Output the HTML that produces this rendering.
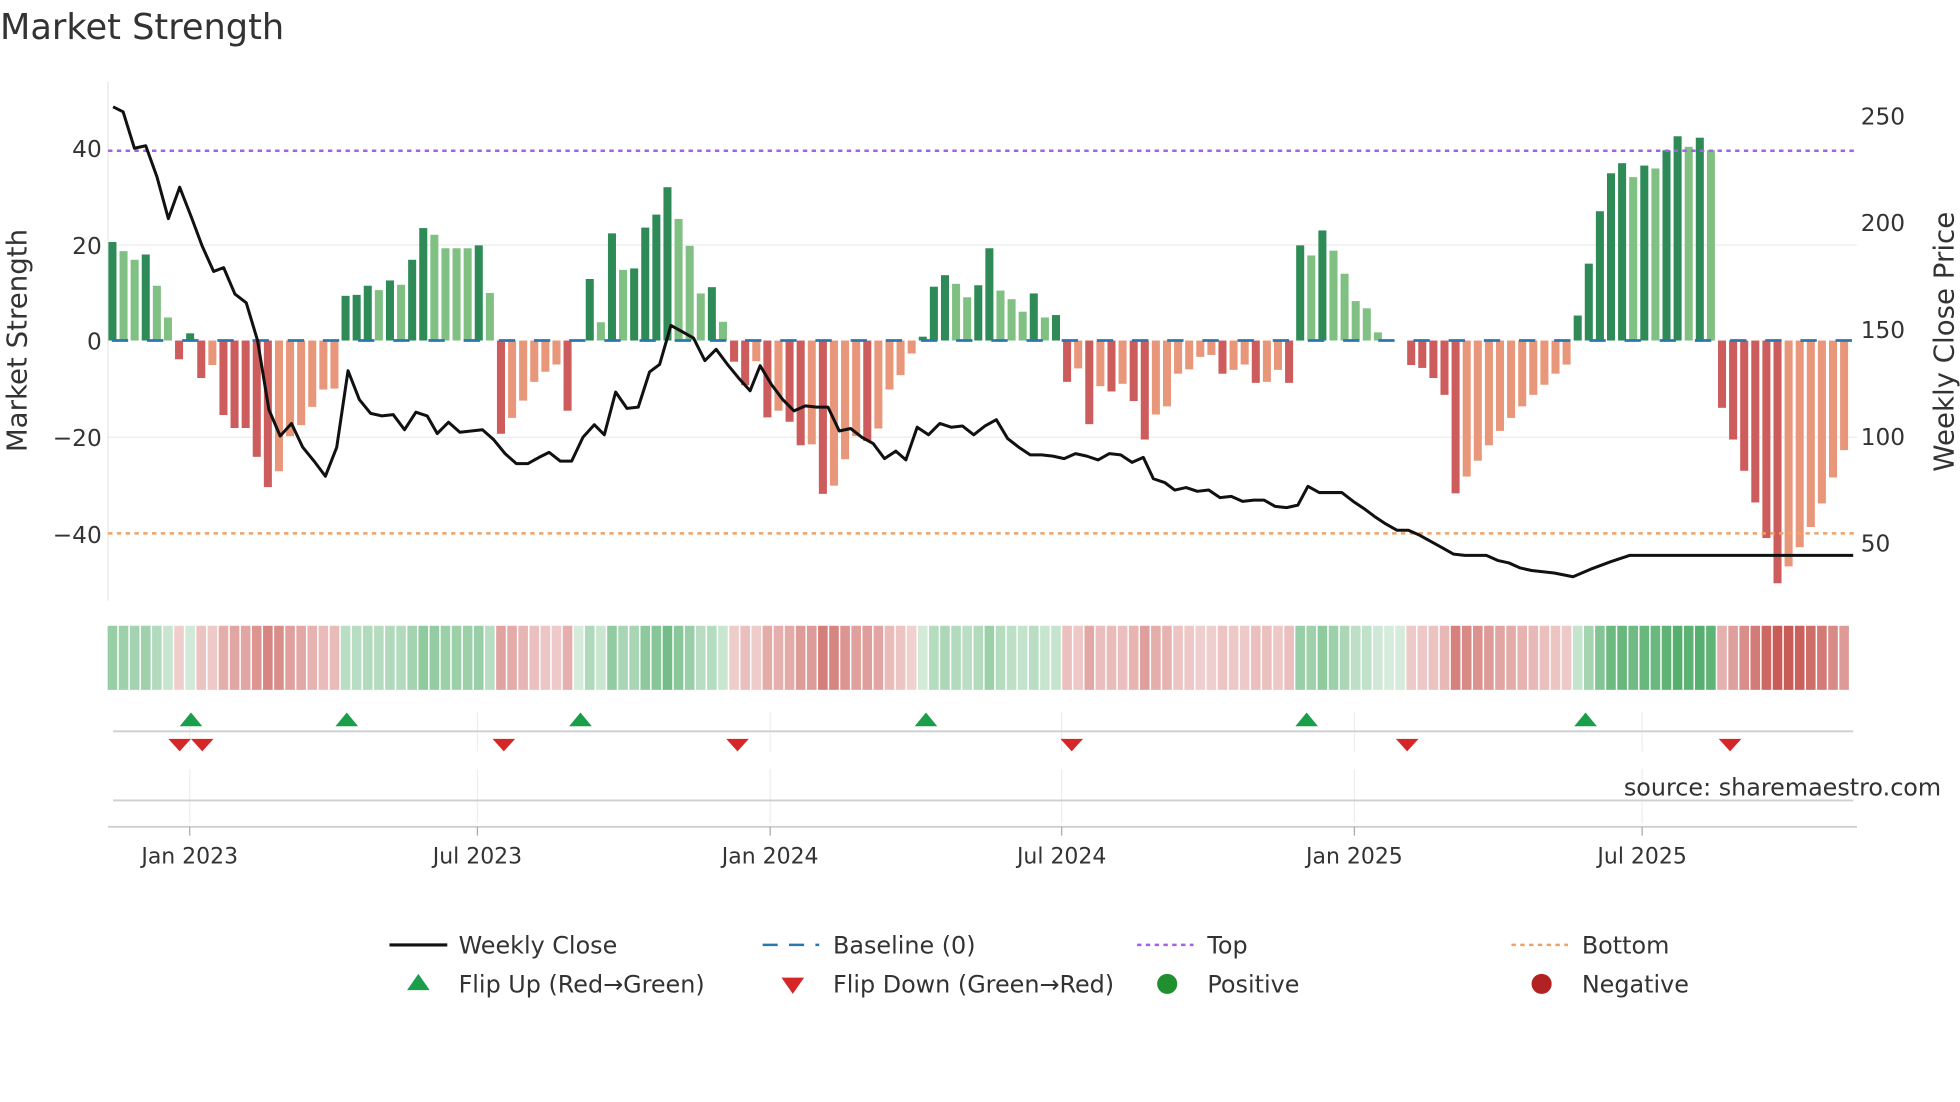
<!DOCTYPE html>
<html><head><meta charset="utf-8"><style>
html,body{margin:0;padding:0;background:#fff;width:1960px;height:1102px;overflow:hidden}
svg{display:block}
text{font-family:"DejaVu Sans","Liberation Sans",sans-serif;fill:#333}
</style></head><body>
<svg id="s" width="1960" height="1102" viewBox="0 0 1560 877" preserveAspectRatio="none" xmlns="http://www.w3.org/2000/svg">
<text x="0" y="31" font-size="28" fill="#333">Market Strength</text>
<g stroke="#ececec" stroke-width="1">
<line x1="86" y1="195" x2="1478" y2="195"/>
<line x1="86" y1="348" x2="1478" y2="348"/>
</g>
<line x1="86" y1="65" x2="86" y2="478" stroke="#e6e6e6" stroke-width="1"/>
<g id="bars"></g>
<line x1="86" y1="120" x2="1478" y2="120" stroke="#a560e8" stroke-width="2" stroke-dasharray="3.5 3.5"/>
<line x1="86" y1="424.5" x2="1478" y2="424.5" stroke="#f0a266" stroke-width="2" stroke-dasharray="3.5 3.5"/>
<line x1="89" y1="271" x2="1478" y2="271" stroke="#2a77b0" stroke-width="2.2" stroke-dasharray="13 15"/>
<polyline fill="none" stroke="#111" stroke-width="2.4" stroke-linejoin="round" points="90,85 98,89 107,118 116,116 125,141 134,174 143,149 152,172 161,196 170,216 178,213 187,234 196,241 205,271 214,326 223,347 232,337 241,356 250,367 259,379 268,356 277,295 286,318 295,329 304,331 313,330 322,342 331,328 340,331 348,345 357,336 366,344 375,343 384,342 393,350 402,361 411,369 420,369 429,364 437,360 446,367 455,367 464,348 473,338 481,346 490,312 499,325 508,324 517,296 525,290 534,259 543,264 552,269 561,287 570,278 579,290 588,301 597,311 605,291 614,306 623,318 632,327 641,323 650,324 659,324 668,343 677,341 686,348 695,353 704,365 713,359 721,366 730,340 739,346 748,337 757,340 766,339 775,346 784,339 793,334 802,349 811,356 820,362 829,362 838,363 847,365 856,361 865,363 874,366 883,361 892,362 901,368 910,364 918,381 927,384 935,390 944,388 953,391 962,390 971,396 980,395 989,399 998,398 1006,398 1015,403 1024,404 1033,402 1041,387 1050,392 1059,392 1068,392 1077,399 1086,405 1094,411 1103,417 1112,422 1121,422 1130,426 1139,431 1148,436 1157,441 1166,442 1183,442 1192,446 1201,448 1210,452 1219,454 1228,455 1237,456 1252,459 1266,453 1282,447 1297,442 1475,442"/>
<g font-size="18.5" text-anchor="end">
<text x="81" y="125">40</text>
<text x="81" y="202">20</text>
<text x="81" y="278">0</text>
<text x="81" y="355">−20</text>
<text x="81" y="432">−40</text>
</g>
<g font-size="18.5">
<text x="1481" y="99">250</text>
<text x="1481" y="184">200</text>
<text x="1481" y="269">150</text>
<text x="1481" y="354">100</text>
<text x="1481" y="439">50</text>
</g>
<text transform="translate(21,271) rotate(-90)" font-size="22" text-anchor="middle">Market Strength</text>
<text transform="translate(1555,272) rotate(-90)" font-size="22" text-anchor="middle">Weekly Close Price</text>
<g id="heat"></g>
<g stroke="#eeeeee" stroke-width="1">
<line x1="151" y1="567" x2="151" y2="598"/><line x1="380" y1="567" x2="380" y2="598"/><line x1="613" y1="567" x2="613" y2="598"/><line x1="845" y1="567" x2="845" y2="598"/><line x1="1078" y1="567" x2="1078" y2="598"/><line x1="1307" y1="567" x2="1307" y2="598"/>
<line x1="151" y1="612" x2="151" y2="655"/><line x1="380" y1="612" x2="380" y2="655"/><line x1="613" y1="612" x2="613" y2="655"/><line x1="845" y1="612" x2="845" y2="655"/><line x1="1078" y1="612" x2="1078" y2="655"/><line x1="1307" y1="612" x2="1307" y2="655"/>
</g>
<line x1="90" y1="582" x2="1475" y2="582" stroke="#cfcfcf" stroke-width="1.5"/>
<line x1="90" y1="637" x2="1475" y2="637" stroke="#cfcfcf" stroke-width="1.5"/>
<line x1="86" y1="658" x2="1478" y2="658" stroke="#cfcfcf" stroke-width="1.5"/>
<g stroke="#aaa" stroke-width="1"><line x1="151" y1="658" x2="151" y2="665"/><line x1="380" y1="658" x2="380" y2="665"/><line x1="613" y1="658" x2="613" y2="665"/><line x1="845" y1="658" x2="845" y2="665"/><line x1="1078" y1="658" x2="1078" y2="665"/><line x1="1307" y1="658" x2="1307" y2="665"/></g>
<g id="tri"></g>
<text x="1545" y="633" font-size="19" fill="#8c8c8c" text-anchor="end">source: sharemaestro.com</text>
<g font-size="17.5" text-anchor="middle">
<text x="151" y="687">Jan 2023</text><text x="380" y="687">Jul 2023</text><text x="613" y="687">Jan 2024</text><text x="845" y="687">Jul 2024</text><text x="1078" y="687">Jan 2025</text><text x="1307" y="687">Jul 2025</text>
</g>
<line x1="310" y1="752" x2="356" y2="752" stroke="#111" stroke-width="2.4"/>
<line x1="607" y1="752" x2="652" y2="752" stroke="#2a77b0" stroke-width="2" stroke-dasharray="12 9"/>
<line x1="905" y1="752" x2="950" y2="752" stroke="#a560e8" stroke-width="2" stroke-dasharray="3.5 3.5"/>
<line x1="1203" y1="752" x2="1248" y2="752" stroke="#f0a266" stroke-width="2" stroke-dasharray="3.5 3.5"/>
<polygon points="324,788 342,788 333,775" fill="#1a9e4a"/>
<polygon points="622,778 640,778 631,791" fill="#d62728"/>
<circle cx="929" cy="783" r="8" fill="#1f8f2f"/>
<circle cx="1227" cy="783" r="8" fill="#b22222"/>
<g font-size="19">
<text x="365" y="759">Weekly Close</text>
<text x="663" y="759">Baseline (0)</text>
<text x="961" y="759">Top</text>
<text x="1259" y="759">Bottom</text>
<text x="365" y="790">Flip Up (Red→Green)</text>
<text x="663" y="790">Flip Down (Green→Red)</text>
<text x="961" y="790">Positive</text>
<text x="1259" y="790">Negative</text>
</g>
</svg>
<script>
var D=[[20.5,1],[18.6,0],[16.8,0],[17.9,1],[11.4,0],[4.8,0],[-3.9,1],[1.5,1],[-7.8,1],[-5.1,0],[-15.5,1],[-18.2,1],[-18.2,1],[-24.2,1],[-30.5,1],[-27.2,0],[-19.9,0],[-17.6,0],[-13.8,0],[-10.2,0],[-10,0],[9.3,1],[9.5,1],[11.4,1],[10.5,0],[12.5,1],[11.6,0],[16.8,1],[23.4,1],[22,0],[19.2,0],[19.2,0],[19.2,0],[19.8,1],[9.9,0],[-19.4,1],[-16.1,0],[-12.5,0],[-8.6,0],[-6.5,0],[-5,0],[-14.6,1],[0,0],[12.8,1],[3.8,0],[22.3,1],[14.7,0],[15,1],[23.5,1],[26.2,1],[31.9,1],[25.3,0],[19.7,0],[9.8,0],[11.1,1],[3.9,0],[-4.4,1],[-9.3,1],[-4.3,0],[-16,1],[-14.6,0],[-16.9,1],[-21.8,1],[-21.6,0],[-31.9,1],[-30.2,0],[-24.7,0],[-19.9,0],[-20.9,1],[-18.3,0],[-10.2,0],[-7.2,0],[-2.7,0],[0.8,1],[11.2,1],[13.6,1],[11.8,0],[9,0],[11.5,1],[19.2,1],[10.4,0],[8.6,0],[6,0],[9.8,1],[4.8,0],[5.3,1],[-8.6,1],[-5.8,0],[-17.4,1],[-9.5,0],[-10.6,1],[-9,0],[-12.6,1],[-20.6,1],[-15.4,0],[-13.7,0],[-6.9,0],[-6,0],[-3.4,0],[-3,0],[-6.9,1],[-6.1,0],[-5,0],[-8.8,1],[-8.6,0],[-6.1,0],[-8.8,1],[19.8,1],[17.7,0],[22.9,1],[18.7,0],[13.9,0],[8.2,0],[6.7,0],[1.7,0],[0,0],[0,0],[-5.1,1],[-5.7,1],[-7.8,1],[-11.3,1],[-31.8,1],[-28.3,0],[-25,0],[-21.8,0],[-18.8,0],[-16.1,0],[-13.7,0],[-11.3,0],[-9.2,0],[-6.9,0],[-5,0],[5.2,1],[16,1],[26.9,1],[34.8,1],[36.9,1],[34,0],[36.4,1],[35.8,0],[39.6,1],[42.5,1],[40.3,0],[42.2,1],[39.6,0],[-14,1],[-20.6,1],[-27.1,1],[-33.7,1],[-41.1,1],[-50.5,1],[-47,0],[-43,0],[-38.8,0],[-33.9,0],[-28.5,0],[-22.8,0]];
var NS="http://www.w3.org/2000/svg",b=document.getElementById('bars'),h=document.getElementById('heat'),t=document.getElementById('tri');
function el(p,n,a){var e=document.createElementNS(NS,n);for(var k in a)e.setAttribute(k,a[k]);p.appendChild(e);}
var sp=8.835,w=6.4,y0=271,u=3.825;
D.forEach(function(d,i){var x=89.5+sp*i,v=d[0];
 var c=v>=0?(d[1]?'#2e8b57':'#80c183'):(d[1]?'#cd5c5c':'#e9977b');
 var hh=Math.abs(v)*u;
 if(hh>0.1)el(b,'rect',{x:x-w/2,y:v>=0?y0-hh:y0,width:w,height:hh,fill:c});
 var a=0.22+0.7*Math.min(Math.abs(v)/45,1);
 el(h,'rect',{x:x-sp/2+0.6,y:498,width:sp-1.2,height:51,fill:v>=0?'#3fa45a':'#c44e48','fill-opacity':a.toFixed(2)});
});
[152,276,462,737,1040,1262].forEach(function(x){el(t,'polygon',{points:(x-9)+',578 '+(x+9)+',578 '+x+',567',fill:'#1a9e4a'});});
[143,161,401,587,853,1120,1377].forEach(function(x){el(t,'polygon',{points:(x-9)+',588 '+(x+9)+',588 '+x+',598',fill:'#d62728'});});
</script>
</body></html>
